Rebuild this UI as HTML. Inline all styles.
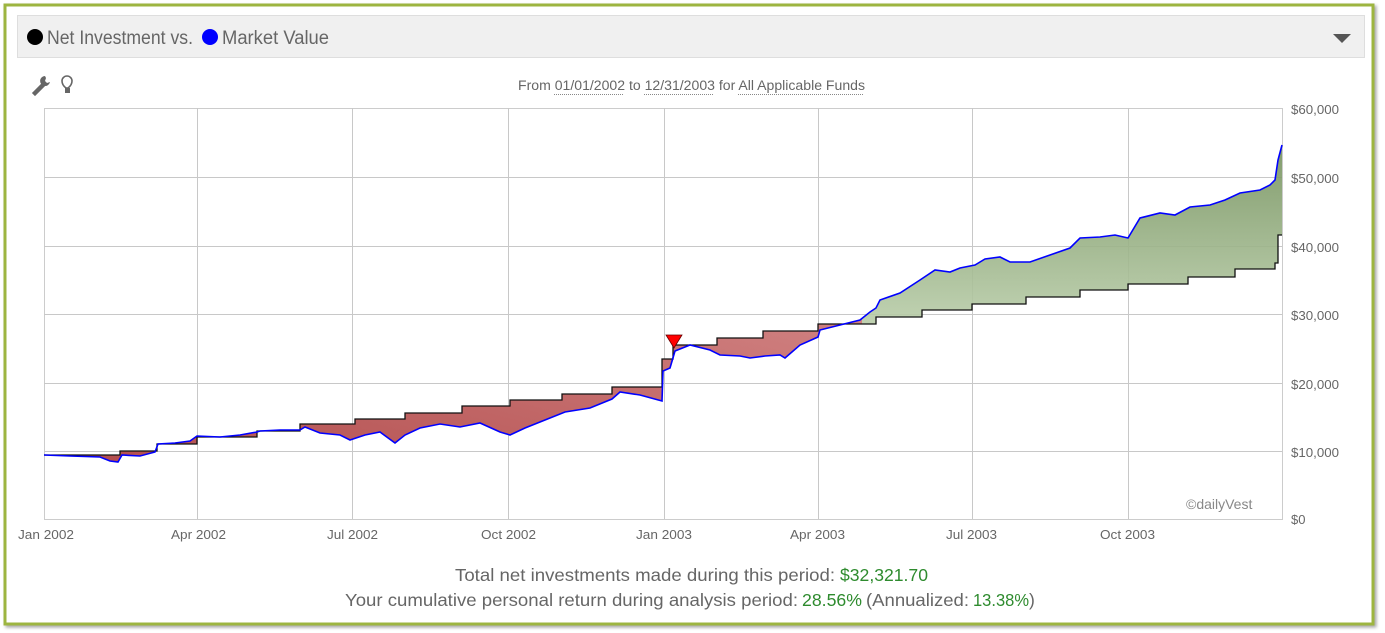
<!DOCTYPE html>
<html><head><meta charset="utf-8"><style>
html,body{margin:0;padding:0;background:#fff;width:1385px;height:633px;overflow:hidden}
svg{display:block;font-family:"Liberation Sans",sans-serif}
</style></head><body>
<svg width="1385" height="633" viewBox="0 0 1385 633" xmlns="http://www.w3.org/2000/svg">
<defs>
<linearGradient id="rg" x1="0" y1="1" x2="1" y2="0">
<stop offset="0" stop-color="#b24c4c"/><stop offset="1" stop-color="#e8acac"/></linearGradient>
<linearGradient id="gg" gradientUnits="userSpaceOnUse" x1="0" y1="320" x2="0" y2="150">
<stop offset="0" stop-color="#b8cca8"/><stop offset="1" stop-color="#76935f"/></linearGradient>
<clipPath id="cl"><rect x="0" y="0" width="862" height="633"/></clipPath>
<clipPath id="cr"><rect x="862" y="0" width="600" height="633"/></clipPath>
<filter id="sh"><feDropShadow dx="2" dy="2" stdDeviation="1.5" flood-color="#000" flood-opacity="0.35"/></filter>
</defs>
<rect x="5" y="5" width="1368" height="619" fill="#fff" stroke="#9db541" stroke-width="3" filter="url(#sh)"/>
<rect x="17.5" y="15.5" width="1347" height="42" fill="#f0f0f0" stroke="#dedede"/>
<circle cx="35" cy="37" r="8" fill="#000"/>
<text x="47" y="44" font-size="19" fill="#666" textLength="146" lengthAdjust="spacingAndGlyphs">Net Investment vs.</text>
<circle cx="210" cy="37" r="8" fill="#0000ff"/>
<text x="222" y="44" font-size="19" fill="#666" textLength="107" lengthAdjust="spacingAndGlyphs">Market Value</text>
<path d="M1333 34 H1351 L1342 43 Z" fill="#555"/>
<g fill="#666">
<path d="M34 93 L44 83 L45 84 L35 94 Z" stroke="#666" stroke-width="3" stroke-linecap="round"/>
<path d="M45 76 a5 5 0 1 0 5 6 l-3 1 -2 -2 1 -3 z"/>
</g>
<g fill="none" stroke="#666" stroke-width="1.6"><path d="M66 88 q-4 -3 -4 -7 a5 5 0 0 1 10 0 q0 4 -4 7 z"/></g>
<rect x="65" y="88" width="5" height="5" fill="#666"/>
<g font-size="13.5" fill="#666">
<text x="518" y="90" textLength="347" lengthAdjust="spacingAndGlyphs">From 01/01/2002 to 12/31/2003 for All Applicable Funds</text>
</g>
<g stroke="#888" stroke-dasharray="1,1" stroke-width="1">
<line x1="554" y1="94.5" x2="624" y2="94.5"/><line x1="644" y1="94.5" x2="714" y2="94.5"/><line x1="738" y1="94.5" x2="864" y2="94.5"/>
</g>
<rect x="44.5" y="108.5" width="1238" height="411" fill="#fff" stroke="#ccc"/>
<g stroke="#c8c8c8" stroke-width="1">
<line x1="44" y1="177.5" x2="1282" y2="177.5"/><line x1="44" y1="246.5" x2="1282" y2="246.5"/>
<line x1="44" y1="314.5" x2="1282" y2="314.5"/><line x1="44" y1="383.5" x2="1282" y2="383.5"/>
<line x1="44" y1="451.5" x2="1282" y2="451.5"/>
<line x1="197.5" y1="108" x2="197.5" y2="519"/><line x1="352.5" y1="108" x2="352.5" y2="519"/>
<line x1="508.5" y1="108" x2="508.5" y2="519"/><line x1="664.5" y1="108" x2="664.5" y2="519"/>
<line x1="818.5" y1="108" x2="818.5" y2="519"/><line x1="972.5" y1="108" x2="972.5" y2="519"/>
<line x1="1128.5" y1="108" x2="1128.5" y2="519"/>
</g>
<path d="M44,455 L70,456 L100,457 L110,461 L118,462 L122,455 L140,456 L155,452 L158,444 L175,443 L190,441 L197,436 L220,437 L240,435 L257,432 L260,431 L280,430 L300,430 L305,427 L320,433 L340,435 L350,440 L365,435 L380,432 L395,443 L405,435 L420,428 L440,424 L460,427 L480,423 L500,432 L510,435 L525,428 L545,420 L565,412 L590,408 L612,399 L620,392 L640,395 L662,401 L663,371 L670,368 L675,351 L690,345 L710,350 L720,355 L740,356 L750,358 L765,356 L780,355 L785,358 L800,345 L818,337 L820,330 L840,325 L860,320 L870,312 L876,308 L880,300 L900,293 L920,280 L935,270 L950,272 L960,268 L975,265 L985,259 L1000,257 L1010,262 L1030,262 L1050,255 L1070,248 L1080,238 L1100,237 L1115,235 L1128,238 L1140,218 L1160,213 L1175,215 L1190,207 L1210,205 L1225,200 L1240,193 L1260,190 L1270,185 L1275,180 L1278,160 L1282,145 L1282,235 L1278,235 L1278,263 L1275,263 L1275,269 L1235,269 L1235,277 L1188,277 L1188,284 L1128,284 L1128,290 L1080,290 L1080,297 L1026,297 L1026,304 L972,304 L972,310 L922,310 L922,317 L876,317 L876,324 L818,324 L818,331 L763,331 L763,338 L717,338 L717,345 L673,345 L673,359 L662,359 L662,387 L612,387 L612,394 L562,394 L562,400 L510,400 L510,406 L462,406 L462,413 L405,413 L405,419 L355,419 L355,424 L300,424 L300,431 L257,431 L257,437 L197,437 L197,444 L157,444 L157,451 L120,451 L120,455 Z" fill="url(#rg)" clip-path="url(#cl)"/>
<path d="M860,320 L870,312 L876,308 L880,300 L900,293 L920,280 L935,270 L950,272 L960,268 L975,265 L985,259 L1000,257 L1010,262 L1030,262 L1050,255 L1070,248 L1080,238 L1100,237 L1115,235 L1128,238 L1140,218 L1160,213 L1175,215 L1190,207 L1210,205 L1225,200 L1240,193 L1260,190 L1270,185 L1275,180 L1278,160 L1282,145 L1282,235 L1278,235 L1278,263 L1275,263 L1275,269 L1235,269 L1235,277 L1188,277 L1188,284 L1128,284 L1128,290 L1080,290 L1080,297 L1026,297 L1026,304 L972,304 L972,310 L922,310 L922,317 L876,317 L876,324 L860,324 Z" fill="url(#gg)" fill-opacity="0.9" clip-path="url(#cr)"/>
<path d="M44,455 H120 V451 H157 V444 H197 V437 H257 V431 H300 V424 H355 V419 H405 V413 H462 V406 H510 V400 H562 V394 H612 V387 H662 V359 H673 V345 H717 V338 H763 V331 H818 V324 H876 V317 H922 V310 H972 V304 H1026 V297 H1080 V290 H1128 V284 H1188 V277 H1235 V269 H1275 V263 H1278 V235 H1282" fill="none" stroke="#111" stroke-width="1.3"/>
<polyline points="44,455 70,456 100,457 110,461 118,462 122,455 140,456 155,452 158,444 175,443 190,441 197,436 220,437 240,435 257,432 260,431 280,430 300,430 305,427 320,433 340,435 350,440 365,435 380,432 395,443 405,435 420,428 440,424 460,427 480,423 500,432 510,435 525,428 545,420 565,412 590,408 612,399 620,392 640,395 662,401 663,371 670,368 675,351 690,345 710,350 720,355 740,356 750,358 765,356 780,355 785,358 800,345 818,337 820,330 840,325 860,320 870,312 876,308 880,300 900,293 920,280 935,270 950,272 960,268 975,265 985,259 1000,257 1010,262 1030,262 1050,255 1070,248 1080,238 1100,237 1115,235 1128,238 1140,218 1160,213 1175,215 1190,207 1210,205 1225,200 1240,193 1260,190 1270,185 1275,180 1278,160 1282,145" fill="none" stroke="#0000ff" stroke-width="1.6"/>
<path d="M666 335 H682 L674 348 Z" fill="#f00" stroke="#600" stroke-width="0.8"/>
<text x="1186" y="509" font-size="14" fill="#888">©dailyVest</text>
<g font-size="13" fill="#666">
<text x="1291" y="114" textLength="48" lengthAdjust="spacingAndGlyphs">$60,000</text>
<text x="1291" y="183" textLength="48" lengthAdjust="spacingAndGlyphs">$50,000</text>
<text x="1291" y="252" textLength="48" lengthAdjust="spacingAndGlyphs">$40,000</text>
<text x="1291" y="320" textLength="48" lengthAdjust="spacingAndGlyphs">$30,000</text>
<text x="1291" y="389" textLength="48" lengthAdjust="spacingAndGlyphs">$20,000</text>
<text x="1291" y="457" textLength="48" lengthAdjust="spacingAndGlyphs">$10,000</text>
<text x="1291" y="524">$0</text>
<text x="18" y="539" textLength="56" lengthAdjust="spacingAndGlyphs">Jan 2002</text>
<text x="171" y="539" textLength="55" lengthAdjust="spacingAndGlyphs">Apr 2002</text>
<text x="327" y="539" textLength="51" lengthAdjust="spacingAndGlyphs">Jul 2002</text>
<text x="481" y="539" textLength="55" lengthAdjust="spacingAndGlyphs">Oct 2002</text>
<text x="636" y="539" textLength="56" lengthAdjust="spacingAndGlyphs">Jan 2003</text>
<text x="790" y="539" textLength="55" lengthAdjust="spacingAndGlyphs">Apr 2003</text>
<text x="946" y="539" textLength="51" lengthAdjust="spacingAndGlyphs">Jul 2003</text>
<text x="1100" y="539" textLength="55" lengthAdjust="spacingAndGlyphs">Oct 2003</text>
</g>
<g font-size="17.5" fill="#666">
<text x="455" y="581" textLength="380" lengthAdjust="spacingAndGlyphs">Total net investments made during this period:</text>
<text x="840" y="581" fill="#2e8b2e" textLength="88" lengthAdjust="spacingAndGlyphs">$32,321.70</text>
<text x="345" y="606" textLength="453" lengthAdjust="spacingAndGlyphs">Your cumulative personal return during analysis period:</text>
<text x="802" y="606" fill="#2e8b2e" textLength="60" lengthAdjust="spacingAndGlyphs">28.56%</text>
<text x="866" y="606" textLength="103" lengthAdjust="spacingAndGlyphs">(Annualized:</text>
<text x="973" y="606" fill="#2e8b2e" textLength="56" lengthAdjust="spacingAndGlyphs">13.38%</text>
<text x="1029" y="606">)</text>
</g>
</svg>
</body></html>
